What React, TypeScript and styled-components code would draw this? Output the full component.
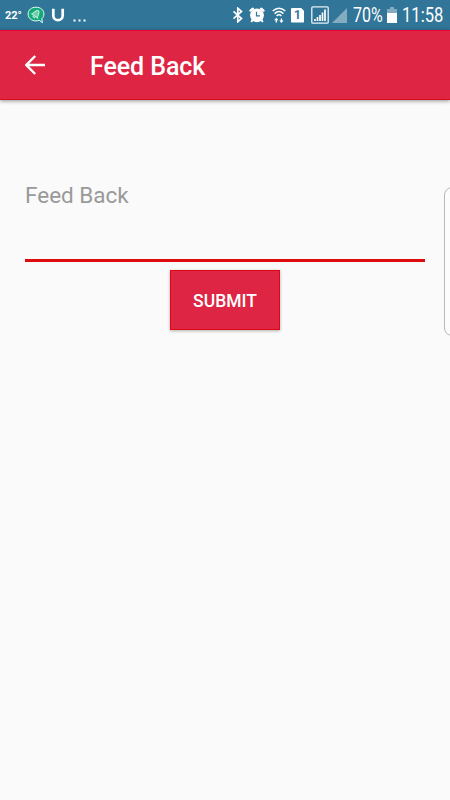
import React from "react";
import styled, { createGlobalStyle } from "styled-components";

const GlobalStyle = createGlobalStyle`
  *, *::before, *::after { box-sizing: border-box; }
  html, body { margin: 0; height: 100%; overflow: hidden; background: #fafafa; }
  body { font-family: Roboto, "Liberation Sans", sans-serif; }
`;

const Screen = styled.div`
  position: relative;
  display: flex;
  flex-direction: column;
  width: 450px;
  height: 800px;
  overflow: hidden;
  background: #fafafa;
`;

const StatusBar = styled.header`
  display: flex;
  justify-content: space-between;
  height: 30px;
  padding-right: 7px;
  background: #317598;
  color: #fff;
`;

const StatusGroup = styled.div`
  display: flex;
  align-items: center;
  height: 30px;
`;

const StatusText = styled.span<{ $size: number; $width: number; $squeeze?: number; $weight?: number; $left?: number; $drop?: number }>`
  display: block;
  width: ${(p) => p.$width}px;
  margin-left: ${(p) => p.$left ?? 0}px;
  padding-top: ${(p) => p.$drop ?? 0}px;
  font-size: ${(p) => p.$size}px;
  font-weight: ${(p) => p.$weight ?? 400};
  line-height: 28px;
  white-space: nowrap;
  transform: scaleX(${(p) => p.$squeeze ?? 1});
  transform-origin: left center;
`;

const StatusIcon = styled.svg<{ $left?: number }>`
  display: block;
  flex: none;
  margin-left: ${(p) => p.$left ?? 0}px;
`;

const AppBar = styled.div`
  display: flex;
  align-items: center;
  flex: none;
  height: 70px;
  padding-left: 25px;
  background: #de2543;
  border-top: 1px solid #ed0033;
  border-bottom: 1px solid #d60b1c;
  box-shadow: 0 1px 4px rgba(0, 0, 0, 0.42);
`;

const BackButton = styled.button`
  display: block;
  width: 20px;
  height: 20px;
  padding: 0;
  border: 0;
  background: none;
`;

const Title = styled.h1`
  margin: 3px 0 0 45px;
  color: #fff;
  font-size: 25px;
  font-weight: 500;
  line-height: 30px;
  letter-spacing: -0.08px;
`;

const Form = styled.form`
  display: flex;
  flex-direction: column;
  align-items: center;
  padding: 79px 25px 0;
`;

const Field = styled.label`
  width: 400px;
  height: 83px;
  border-bottom: 3px solid #de0b0f;
  color: #999;
  font-size: 22.5px;
  line-height: 32px;
`;

const SubmitButton = styled.button`
  width: 110px;
  height: 60px;
  margin-top: 8px;
  padding: 1px 0 0;
  border: 1px solid #dc0710;
  border-radius: 0;
  background: #de2543;
  box-shadow: 0 1px 3px rgba(0, 0, 0, 0.3);
  color: #fff;
  font: 500 17.5px Roboto, sans-serif;
`;

const EdgeHandle = styled.aside`
  position: absolute;
  top: 187px;
  right: -12px;
  width: 18px;
  height: 149px;
  border: 1px solid #b8b8b8;
  border-radius: 8px;
  background: #fcfcfc;
`;

function NotificationIcon() {
  return (
    <StatusIcon width="18" height="18" viewBox="0 0 18 18" $left={5}>
      <path d="M9 1.200C4.400 1.200 1.100 4 1.100 8s3.300 6.900 7.900 6.900c1.200 0 2.200-.2 3.200-.6l3.200 2.400-.5-4.100C16.300 11.400 16.900 9.900 16.900 8c0-4-3.300-6.800-7.900-6.800Z" fill="#13aa78" stroke="#e4fff5" strokeWidth="1" />
      <g transform="rotate(35 9 8)" fill="none" stroke="#c2ecdd" strokeWidth="1">
        <path d="M5.500 10.300c1.300-1 .7-6.300 3.500-6.300s2.200 5.300 3.500 6.300Z" fill="#69cda8" />
        <path d="M7.500 11.800h3" />
      </g>
    </StatusIcon>
  );
}

function BluetoothIcon() {
  return (
    <StatusIcon width="12" height="16" viewBox="0 0 12 16">
      <path d="m1.500 4.300 8 7.200-3.700 3.300V1.200l3.700 3.300-8 7.200" fill="none" stroke="#fff" strokeWidth="1.700" />
    </StatusIcon>
  );
}

function AlarmIcon() {
  return (
    <StatusIcon width="16" height="16" viewBox="0 0 16 16" $left={5}>
      <path d="M1.500 3.600 3.800 1.800M14.500 3.600l-2.300-1.800" stroke="#fff" strokeWidth="2.400" strokeLinecap="round" />
      <path d="m3.700 12.500-1 1.800M12.300 12.500l1 1.800" stroke="#fff" strokeWidth="2" strokeLinecap="round" />
      <circle cx="8" cy="8.300" r="6.900" fill="#fff" />
      <path d="M7.500 4.800v4h3.500" fill="none" stroke="#317598" strokeWidth="1.200" />
    </StatusIcon>
  );
}

function WifiIcon() {
  return (
    <StatusIcon width="16" height="18" viewBox="0 0 16 18" $left={6}>
      <g fill="none" stroke="#fff" strokeWidth="1.500">
        <path d="M1.700 5Q8-.6 14.300 5M3.600 7.600Q8 3.500 12.400 7.600M5.600 9.900Q8 7.700 10.400 9.900" />
      </g>
      <path d="M5.300 11.800 7.500 14.200H6v2.200H4.600v-2.200H3.100ZM10.400 17l-2.200-2.400h1.500v-2.200h1.400v2.200h1.500Z" fill="#fff" />
    </StatusIcon>
  );
}

const SimCard = styled.span`
  display: flex;
  align-items: center;
  justify-content: center;
  width: 13px;
  height: 15px;
  margin-left: 4px;
  background: #fff;
  border-radius: 1px;
  clip-path: polygon(0 0, 75% 0, 100% 22%, 100% 100%, 0 100%);
  color: #317598;
  font-size: 12px;
  font-weight: 700;
  line-height: 15px;
`;

function SignalIcon() {
  return (
    <StatusIcon width="18" height="18" viewBox="0 0 18 18" $left={7}>
      <rect x=".8" y=".8" width="16.400" height="16.400" rx="1" fill="none" stroke="#e8f1f5" strokeWidth="1.300" />
      <path d="M4 15v-2M6.500 15v-4M9 15V9M11.500 15V6.500M14 15V3.500" stroke="#fff" strokeWidth="1.700" />
    </StatusIcon>
  );
}

function EmptySignalIcon() {
  return (
    <StatusIcon width="15" height="15" viewBox="0 0 15 15" $left={3}>
      <path d="M0 15 15 0v15Z" fill="#83acc1" />
    </StatusIcon>
  );
}

function BatteryIcon() {
  return (
    <StatusIcon width="10" height="16" viewBox="0 0 10 16" $left={3}>
      <path d="M3 0h4v2h3v5H0V2h3Z" fill="#83acc1" />
      <path d="M0 6h10v10H0Z" fill="#fff" />
    </StatusIcon>
  );
}

export default function App() {
  return (
    <>
      <GlobalStyle />
      <Screen>
        <StatusBar>
          <StatusGroup>
            <StatusText $size={11} $width={17} $left={5} $weight={700} $drop={1}>22°</StatusText>
            <NotificationIcon />
            <StatusIcon width="14" height="14" viewBox="0 0 14 14" $left={6}>
              <path d="M2.300 .7v6.800a4.700 4.700 0 0 0 9.400 0V.7" fill="none" stroke="#fff" strokeWidth="2.700" />
            </StatusIcon>
            <StatusIcon width="16" height="14" viewBox="0 0 16 14" $left={7}>
              <path d="M1.500 12.500h2M6.500 12.500h2M11.500 12.500h2" stroke="#fff" strokeWidth="2" />
            </StatusIcon>
          </StatusGroup>
          <StatusGroup>
            <BluetoothIcon />
            <AlarmIcon />
            <WifiIcon />
            <SimCard>1</SimCard>
            <SignalIcon />
            <EmptySignalIcon />
            <StatusText $size={19.5} $width={31} $left={6} $squeeze={0.82} $drop={2}>70%</StatusText>
            <BatteryIcon />
            <StatusText $size={19.5} $width={41} $left={5} $squeeze={0.85} $drop={2}>11:58</StatusText>
          </StatusGroup>
        </StatusBar>
        <AppBar>
          <BackButton aria-label="Back">
            <svg width="20" height="20" viewBox="0 0 20 20" display="block">
              <path d="M20 10H1.800M10.200 1 1.300 10l8.900 9" fill="none" stroke="#fff" strokeWidth="2.400" />
            </svg>
          </BackButton>
          <Title>Feed Back</Title>
        </AppBar>
        <Form>
          <Field>Feed Back</Field>
          <SubmitButton type="button">SUBMIT</SubmitButton>
        </Form>
        <EdgeHandle />
      </Screen>
    </>
  );
}
